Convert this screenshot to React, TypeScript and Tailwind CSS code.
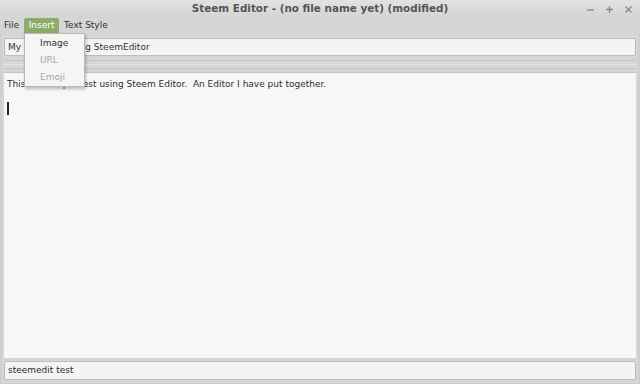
import React from "react";

const font = { fontFamily: '"DejaVu Sans", sans-serif' };

export default function App() {
  return (
    <div
      className="relative w-[640px] h-[384px] overflow-hidden bg-[#d6d6d6] flex flex-col text-[9px] text-[#3c3c3c]"
      style={font}
    >
      {/* title bar */}
      <div className="relative h-[18px] flex items-center justify-center bg-gradient-to-b from-[#e2e2e2] to-[#d4d4d4]">
        <span className="font-bold text-[10.4px] text-[#555]">
          Steem Editor - (no file name yet) (modified)
        </span>
        <div className="absolute right-[7px] top-0 h-full flex items-center gap-[10px] text-[#8a8a8a]">
          <svg width="9" height="9" viewBox="0 0 9 9">
            <path d="M1 5h7" stroke="currentColor" strokeWidth="1.4" />
          </svg>
          <svg width="9" height="9" viewBox="0 0 9 9">
            <path d="M1 4.5h7M4.5 1v7" stroke="currentColor" strokeWidth="1.4" />
          </svg>
          <svg width="9" height="9" viewBox="0 0 9 9">
            <path d="M1.5 1.5l6 6M7.5 1.5l-6 6" stroke="currentColor" strokeWidth="1.4" />
          </svg>
        </div>
      </div>

      {/* menu bar */}
      <div className="h-[15px] flex items-stretch pl-[4px] text-[#333]">
        <div className="flex items-center pt-[1px]">File</div>
        <div className="ml-[5px] w-[35px] flex items-center justify-center pt-[1px] bg-[#8cad6a] text-white rounded-t-[2px]">
          Insert
        </div>
        <div className="ml-[5px] flex items-center pt-[1px]">Text Style</div>
      </div>

      {/* body */}
      <div className="flex-1 flex flex-col px-[2px] pb-[3px] pt-[5px] border-x-[2px] border-b-[1px] border-[#cfcfcf]">
        <div className="h-[18px] flex items-center px-[3px] pt-[1px] bg-[#f4f4f4] border border-[#bdbdbd] rounded-[2px] text-[#333]">
          My first post using SteemEditor
        </div>
        <div className="h-[15px] mt-[1px] flex flex-col justify-center gap-[3px]">
          <div className="h-px bg-[#c6c6c6]" />
          <div className="h-px bg-[#e6e6e6]" />
          <div className="h-px bg-[#c6c6c6]" />
        </div>
        <div className="flex-1 bg-[#f7f7f7] border-t border-[#c4c4c4] px-[3px] pt-[4px] text-[#2e2e2e] leading-[14px]">
          <div>This is a simple test using Steem Editor.&nbsp; An Editor I have put together.</div>
          <div className="mt-[11px] h-[13px] w-[2px] bg-[#222]" />
        </div>
        <div className="mt-[3px] h-[19px] flex items-center px-[3px] pt-[1px] bg-[#f4f4f4] border border-[#bdbdbd] rounded-[2px] text-[#2e2e2e]">
          steemedit test
        </div>
      </div>

      {/* Insert dropdown */}
      <div className="absolute left-[24px] top-[33px] w-[61px] h-[54px] bg-[#f5f5f5] border border-[#b8b8b8] shadow-[1px_2px_3px_rgba(0,0,0,0.25)] flex flex-col pt-[1px]">
        <div className="h-[17px] pl-[15px] flex items-center text-[#333]">Image</div>
        <div className="h-[17px] pl-[15px] flex items-center text-[#a8a8a8]">URL</div>
        <div className="h-[17px] pl-[15px] flex items-center text-[#a8a8a8]">Emoji</div>
      </div>
    </div>
  );
}
